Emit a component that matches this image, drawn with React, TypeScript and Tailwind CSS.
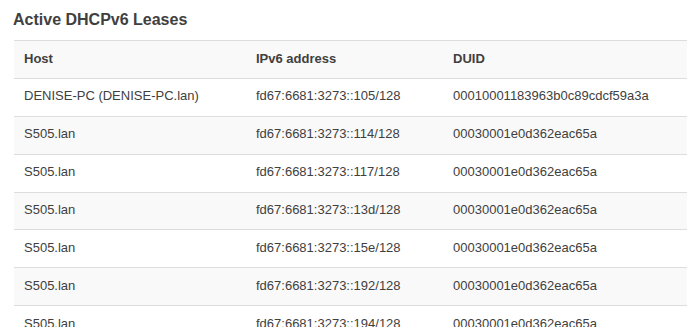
import React from "react";

const rows: [string, string, string][] = [
  ["DENISE-PC (DENISE-PC.lan)", "fd67:6681:3273::105/128", "00010001183963b0c89cdcf59a3a"],
  ["S505.lan", "fd67:6681:3273::114/128", "00030001e0d362eac65a"],
  ["S505.lan", "fd67:6681:3273::117/128", "00030001e0d362eac65a"],
  ["S505.lan", "fd67:6681:3273::13d/128", "00030001e0d362eac65a"],
  ["S505.lan", "fd67:6681:3273::15e/128", "00030001e0d362eac65a"],
  ["S505.lan", "fd67:6681:3273::192/128", "00030001e0d362eac65a"],
  ["S505.lan", "fd67:6681:3273::194/128", "00030001e0d362eac65a"],
];

export default function App() {
  return (
    <div
      className="w-[687px] h-[327px] overflow-hidden bg-white text-[#404040]"
      style={{ fontFamily: '"Liberation Sans", Arial, sans-serif' }}
    >
      <h2 className="pl-[13px] pt-[11px] mb-[11px] text-[16px] leading-[18px] font-bold">
        Active DHCPv6 Leases
      </h2>
      <div className="ml-[14px]">
        <div className="grid grid-cols-[232px_197px_1fr] bg-[#f9f9f9] border-t border-[#dddddd] text-[13px] leading-[18px] font-bold">
          <div className="pl-[10px] pt-[8.5px] pb-[10.4px]">Host</div>
          <div className="pl-[10px] pt-[8.5px] pb-[10.4px]">IPv6 address</div>
          <div className="pl-[10px] pt-[8.5px] pb-[10.4px]">DUID</div>
        </div>
        {rows.map((r, i) => (
          <div
            key={i}
            className={
              "grid grid-cols-[232px_197px_1fr] border-t border-[#dddddd] text-[13px] leading-[18px] " +
              (i % 2 === 1 ? "bg-[#f9f9f9]" : "bg-white")
            }
          >
            <div className="pl-[10px] pt-[8.5px] pb-[10.4px]">{r[0]}</div>
            <div className="pl-[10px] pt-[8.5px] pb-[10.4px]">{r[1]}</div>
            <div className="pl-[10px] pt-[8.5px] pb-[10.4px]">{r[2]}</div>
          </div>
        ))}
      </div>
    </div>
  );
}
